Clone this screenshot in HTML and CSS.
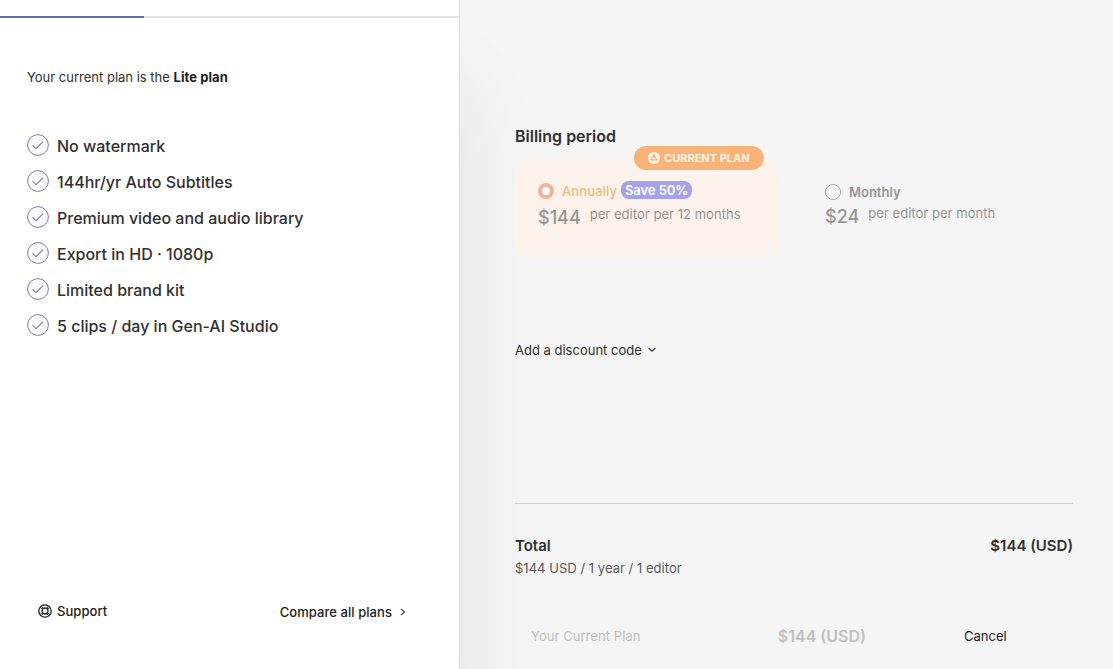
FILE: index.html
```
<!DOCTYPE html>
<html lang="en">
<head>
  <meta charset="UTF-8">
  <title>Billing</title>
  <link rel="stylesheet" href="styles.css">
</head>
<body>
  <svg width="0" height="0" class="sprite">
    <symbol id="check" viewBox="0 0 22 22">
      <circle cx="11" cy="11" r="10.4" fill="#fbfbff" stroke="#7d7cb8" stroke-width="1"/>
      <path d="M5.6 11.4l3.4 3.2 7.2-7" fill="none" stroke="#7f80c4" stroke-width="1.2"/>
    </symbol>
  </svg>
  <div class="container">
    <div class="plan">
      <div class="progress"><div class="progress-bar"></div></div>
      <p class="current">Your current plan is the <b>Lite plan</b></p>
      <ul class="features">
        <li><svg><use href="#check"/></svg><span>No watermark</span></li>
        <li><svg><use href="#check"/></svg><span>144hr/yr Auto Subtitles</span></li>
        <li><svg><use href="#check"/></svg><span>Premium video and audio library</span></li>
        <li><svg><use href="#check"/></svg><span>Export in HD · 1080p</span></li>
        <li><svg><use href="#check"/></svg><span>Limited brand kit</span></li>
        <li><svg><use href="#check"/></svg><span>5 clips / day in Gen-AI Studio</span></li>
      </ul>
      <div class="plan-footer">
        <a class="support">
          <svg width="14" height="14" viewBox="0 0 14 14" fill="none" stroke="#222" stroke-width="1.3">
            <circle cx="7" cy="7" r="6.2"/>
            <circle cx="7" cy="7" r="3"/>
            <path d="M2.4 3.6l2.2 1.6M3.6 2.4l1.6 2.2M11.6 3.6L9.4 5.2M10.4 2.4L8.8 4.6M2.4 10.4l2.2-1.6M3.6 11.6l1.6-2.2M11.6 10.4L9.4 8.8M10.4 11.6L8.8 9.4" stroke-width="1"/>
          </svg>
          <span>Support</span>
        </a>
        <a class="compare">
          <span>Compare all plans</span>
          <svg width="6" height="8" viewBox="0 0 6 8" fill="none" stroke="#333" stroke-width="1.1"><path d="M1 .8L4.4 4 1 7.2"/></svg>
        </a>
      </div>
    </div>

    <div class="billing">
      <h2>Billing period</h2>
      <div class="periods">
        <div class="period annual">
          <div class="badge">
            <svg width="12" height="12" viewBox="0 0 12 12">
              <circle cx="6" cy="6" r="6" fill="#fff3e6"/>
              <path d="M6 2.8L9 7.8H3z" fill="none" stroke="#f8b478" stroke-width="1.3" stroke-linejoin="round"/>
            </svg>
            <span>CURRENT PLAN</span>
          </div>
          <div class="period-name">
            <i class="radio checked"></i>
            <span class="label">Annually</span>
            <span class="save">Save 50%</span>
          </div>
          <div class="price"><span class="amount">$144</span><span class="per">per editor per 12 months</span></div>
        </div>
        <div class="period monthly">
          <div class="period-name">
            <i class="radio"></i>
            <span class="label">Monthly</span>
          </div>
          <div class="price"><span class="amount">$24</span><span class="per">per editor per month</span></div>
        </div>
      </div>
      <a class="discount">
        <span>Add a discount code</span>
        <svg width="8" height="6" viewBox="0 0 8 6" fill="none" stroke="#333" stroke-width="1.2"><path d="M.6 1L4 4.2 7.4 1"/></svg>
      </a>
      <div class="total">
        <div class="total-row"><span class="total-label">Total</span><span class="total-price">$144 (USD)</span></div>
        <div class="total-info">$144 USD / 1 year / 1 editor</div>
      </div>
      <div class="actions">
        <button class="pay" disabled><span>Your Current Plan</span><span class="pay-price">$144 (USD)</span></button>
        <button class="cancel">Cancel</button>
      </div>
    </div>
  </div>
</body>
</html>
```
FILE: styles.css
```
* {
  box-sizing: border-box;
}

body {
  margin: 0;
  font-family: Inter, "Liberation Sans", sans-serif;
  font-size: 13px;
  color: #303030;
  background: #f5f5f5;
}

svg {
  display: block;
  flex: none;
}

.sprite {
  display: none;
}

.container {
  display: flex;
  height: 669px;
  overflow: hidden;
}

.plan {
  position: relative;
  display: flex;
  flex-direction: column;
  width: 460px;
  padding-top: 16px;
  background: #fff;
  border-right: 1px solid #dcdcdc;
  box-shadow: 0 80px 80px rgba(0, 0, 0, 0.08);
}

.progress {
  height: 2px;
  background: #e6e6e6;
}

.progress-bar {
  width: 144px;
  height: 2px;
  background: #626da3;
}

.current {
  margin: 49px 0 0 27px;
  line-height: 20px;
}

.current b {
  color: #1a1a1a;
  letter-spacing: 0.08px;
}

.features {
  margin: 40px 0 0;
  padding: 0 0 0 27px;
  list-style: none;
}

.features li {
  display: flex;
  gap: 8px;
  height: 36px;
  padding-top: 7px;
  font-size: 16px;
  font-weight: 450;
  line-height: 24px;
}

.features svg {
  width: 22px;
  height: 22px;
}

.plan-footer {
  display: flex;
  justify-content: space-between;
  margin: auto 53px 47px 38px;
  font-weight: 500;
  line-height: 20px;
  letter-spacing: 0.06px;
  color: #222;
}

.support, .compare {
  display: flex;
  align-items: center;
}

.support {
  gap: 5px;
  padding-bottom: 1px;
}

.compare {
  gap: 8px;
  padding-top: 1px;
}

.billing {
  flex: 1;
  padding: 124px 40px 0 55px;
}

h2 {
  margin: 0;
  font-size: 16px;
  font-weight: 600;
  line-height: 24px;
}

.periods {
  display: flex;
  gap: 23px;
  margin-top: 11px;
}

.period {
  position: relative;
  height: 98px;
  padding: 23px 0 0 23px;
  color: #969594;
}

.annual {
  width: 264px;
  border-radius: 14px;
  background: linear-gradient(#faf3ee, #fcf2eb 30%, #fcf2eb 85%, #faf3ee);
  box-shadow: 0 0 8px #faf3ee;
}

.monthly {
  padding-top: 24px;
}

.badge {
  position: absolute;
  top: -13px;
  right: 15px;
  display: flex;
  align-items: center;
  gap: 4px;
  width: 130px;
  height: 24px;
  padding-left: 14px;
  border-radius: 12px;
  background: #f8b478;
  color: #fff3e6;
  font-size: 11px;
  font-weight: 700;
}

.period-name {
  display: flex;
  align-items: center;
  height: 18px;
}

.radio {
  width: 16px;
  height: 16px;
  margin-right: 8px;
  border: 1px solid #aaa;
  border-radius: 50%;
}

.checked {
  border: 4px solid #f0b395;
  background: #fff;
}

.label {
  font-weight: 500;
  letter-spacing: 0.1px;
}

.monthly .label {
  font-weight: 600;
  letter-spacing: 0;
}

.annual .label {
  color: #efbc80;
}

.save {
  height: 18px;
  margin: 0 0 2px 4px;
  padding: 0 4px;
  border-radius: 8px;
  background: #a3a2ea;
  color: #fff;
  font-weight: 600;
  line-height: 18px;
  letter-spacing: -0.08px;
}

.price {
  display: flex;
  gap: 9px;
  margin-top: 3px;
}

.monthly .price {
  margin-top: 2px;
}

.amount {
  font-size: 18px;
  font-weight: 500;
  line-height: 28px;
}

.annual .amount {
  line-height: 30px;
}

.monthly .per {
  line-height: 20px;
}

.per {
  line-height: 22px;
  letter-spacing: 0.04px;
}

.discount {
  display: flex;
  align-items: center;
  gap: 6px;
  margin-top: 83px;
  line-height: 20px;
}

.total {
  margin-top: 143px;
  padding-top: 31px;
  border-top: 1px solid #d0d0d0;
}

.total-row {
  display: flex;
  justify-content: space-between;
  font-size: 15px;
  font-weight: 600;
  line-height: 22px;
}

.total-info {
  margin-top: 1px;
  line-height: 20px;
  letter-spacing: 0.03px;
  color: #5a5a5a;
}

.actions {
  display: flex;
  margin-top: 38px;
}

.actions button {
  padding: 0;
  border: 0;
  background: none;
  font: inherit;
  line-height: 40px;
  color: #222;
}

.actions .pay {
  display: flex;
  justify-content: space-between;
  width: 366px;
  padding: 0 15px 0 16px;
  letter-spacing: 0.06px;
  color: #c0c0c0;
}

.actions .pay-price {
  font-size: 16px;
  font-weight: 600;
  letter-spacing: 0;
}

.actions .cancel {
  margin-left: 83px;
}
```
